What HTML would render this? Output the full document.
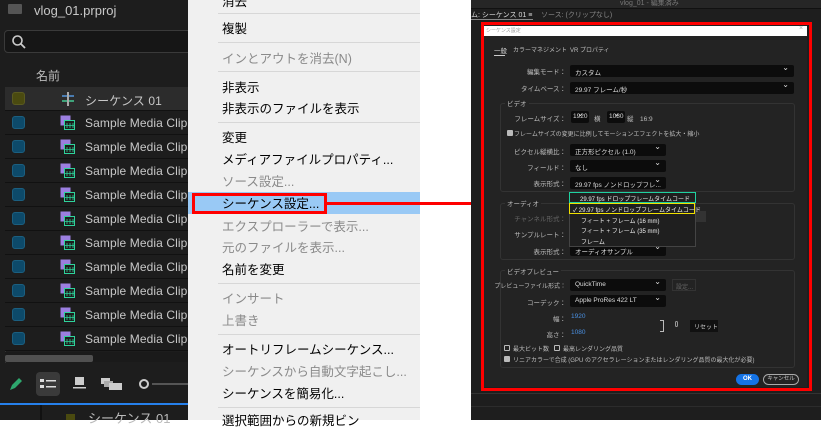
<!DOCTYPE html>
<html><head><meta charset="utf-8"><style>
*{margin:0;padding:0;box-sizing:border-box}
body{width:821px;height:420px;overflow:hidden;background:#fff;position:relative;font-family:"Liberation Sans","Noto Sans CJK JP",sans-serif}
.a{position:absolute;white-space:nowrap}
.lp{left:0;top:0;width:188px;height:420px;background:#1d1d1d}
.row{left:5px;width:183px;height:24px;border-bottom:1px solid #111;background:#1d1d1d}
.sw{left:7px;top:5px;width:13px;height:13px;border-radius:3px;background:#0d4a6a;border:1px solid #1b5f80}
.rt{left:80px;top:5px;color:#c8c8c8;font-size:12px;letter-spacing:0.1px}
.menu{left:188px;top:0;width:232px;height:420px;background:#f0f0f0}
.mi{left:34px;font-size:12.5px;color:#000}
.g{color:#8a8a8a}
.sep{left:30px;width:202px;height:1px;background:#d7d7d7}
.dl{font-size:6.5px;color:#bdbdbd}
.lbl{font-size:6.5px;color:#bdbdbd;text-align:right;width:80px}
.dd{height:12px;background:#0c0c0c;border-radius:2px;font-size:6.5px;color:#ddd;padding:2px 0 0 5px}
.dd:after{content:"⌄";position:absolute;right:5px;top:-2px;font-size:8px;color:#ddd}
.grp{border:1px solid #333;border-radius:3px}
.cb{width:6px;height:6px;border:1px solid #bbb;border-radius:1px}
.li{font-size:6px;color:#eee}
</style></head><body>
<div class="a lp">
 <div class="a" style="left:8px;top:4px;width:14px;height:10px;background:#555;border-radius:1px"></div>
 <div class="a" style="left:34px;top:3px;color:#c8c8c8;font-size:13px">vlog_01.prproj</div>
 <div class="a" style="left:4px;top:30px;width:190px;height:23px;border:1px solid #3a3a3a;border-radius:4px;background:#161616"></div>
 <svg class="a" style="left:11px;top:34px" width="16" height="16"><circle cx="6.5" cy="6.5" r="4.5" stroke="#ccc" stroke-width="1.6" fill="none"/><path d="M10 10l4 4" stroke="#ccc" stroke-width="1.8"/></svg>
 <div class="a" style="left:36px;top:67px;color:#bbb;font-size:12px">名前</div>
 <div class="a" style="left:5px;top:87px;width:1px;height:276px;background:#333"></div>
</div>
<div class="a row" style="top:87px;background:#2c2c2c"><div class="a sw" style="background:#4a4a10;border-color:#5a5a20"></div>
<svg class="a" style="left:55px;top:5px" width="16" height="14"><rect x="2" y="3" width="12" height="2" fill="#4a7bb0"/><rect x="2" y="8" width="12" height="2" fill="#3fa37a"/><rect x="7" y="0" width="2" height="14" fill="#aaa"/></svg>
<div class="a rt">シーケンス 01</div></div>
<div id="rows"></div>
<script>
var h='';for(var i=1;i<11;i++){var t=87+i*24;h+='<div class="a row" style="top:'+t+'px"><div class="a sw"></div><svg class="a" style="left:55px;top:4px" width="16" height="16"><rect x="0.5" y="0.5" width="10" height="10" fill="#9b7fe0"/><rect x="4.5" y="5.5" width="10" height="9" fill="#1d1d1d" stroke="#2ed39b"/><path d="M7 8v5M10 8v5M13 8v5M5 10.5h9" stroke="#2ed39b" stroke-width="0.8"/></svg><div class="a rt">Sample Media Clip</div></div>'}document.getElementById('rows').outerHTML=h;
</script>
<div class="a" style="left:5px;top:352px;width:183px;height:10px;background:#1a1a1a"></div>
<div class="a" style="left:5px;top:355px;width:88px;height:7px;background:#505050;border-radius:2px"></div>
<svg class="a" style="left:8px;top:376px" width="16" height="16"><path d="M2 14l2-5 7-7 3 3-7 7z" fill="#2ea86e"/></svg>
<div class="a" style="left:36px;top:372px;width:24px;height:24px;background:#3a3a3a;border-radius:4px"></div>
<svg class="a" style="left:40px;top:378px" width="16" height="12"><rect x="0" y="1" width="4" height="3" fill="#ddd"/><rect x="0" y="7" width="4" height="3" fill="#ddd"/><rect x="6" y="2" width="10" height="1.5" fill="#ddd"/><rect x="6" y="8" width="10" height="1.5" fill="#ddd"/></svg>
<svg class="a" style="left:73px;top:377px" width="14" height="13"><rect x="2" y="0" width="9" height="8" fill="#ccc"/><rect x="0" y="10" width="13" height="1.5" fill="#ccc"/></svg>
<svg class="a" style="left:101px;top:377px" width="22" height="13"><rect x="0" y="1" width="9" height="6" fill="#ccc"/><rect x="3" y="4" width="9" height="6" fill="#aaa"/><rect x="8" y="6" width="13" height="7" fill="#ccc"/></svg>
<div class="a" style="left:139px;top:379px;width:10px;height:10px;border:2px solid #ccc;border-radius:50%"></div>
<div class="a" style="left:152px;top:383px;width:36px;height:2px;background:#555"></div>
<div class="a" style="left:0;top:403px;width:188px;height:2px;background:#2680eb"></div>
<div class="a" style="left:40px;top:405px;width:2px;height:15px;background:#111"></div>
<div class="a" style="left:66px;top:414px;width:9px;height:6px;background:#4a4a10"></div>
<div class="a" style="left:88px;top:408px;color:#bbb;font-size:13px">シーケンス 01</div>
<div class="a menu">
 <div class="a mi" style="top:-9px">消去</div>
 <div class="a sep" style="top:13px"></div>
 <div class="a mi" style="top:18px">複製</div>
 <div class="a sep" style="top:42px"></div>
 <div class="a mi g" style="top:48px">インとアウトを消去(N)</div>
 <div class="a sep" style="top:71px"></div>
 <div class="a mi" style="top:77px">非表示</div>
 <div class="a mi" style="top:98px">非表示のファイルを表示</div>
 <div class="a sep" style="top:122px"></div>
 <div class="a mi" style="top:127px">変更</div>
 <div class="a mi" style="top:149px">メディアファイルプロパティ...</div>
 <div class="a mi g" style="top:171px">ソース設定...</div>
 <div class="a" style="left:0;top:192px;width:232px;height:22px;background:#99c9f5"></div>
 <div class="a mi" style="top:193px">シーケンス設定...</div>
 <div class="a mi g" style="top:216px">エクスプローラーで表示...</div>
 <div class="a mi g" style="top:237px">元のファイルを表示...</div>
 <div class="a mi" style="top:259px">名前を変更</div>
 <div class="a sep" style="top:283px"></div>
 <div class="a mi g" style="top:288px">インサート</div>
 <div class="a mi g" style="top:310px">上書き</div>
 <div class="a sep" style="top:334px"></div>
 <div class="a mi" style="top:339px">オートリフレームシーケンス...</div>
 <div class="a mi g" style="top:361px">シーケンスから自動文字起こし...</div>
 <div class="a mi" style="top:383px">シーケンスを簡易化...</div>
 <div class="a sep" style="top:407px"></div>
 <div class="a mi" style="top:410px">選択範囲からの新規ビン</div>
</div>
<div class="a" style="left:192px;top:193px;width:135px;height:21px;border:3px solid #f00"></div>
<div class="a" style="left:327px;top:202px;width:156px;height:3px;background:#f00"></div>
<div class="a" style="left:471px;top:0;width:350px;height:420px;background:#1e1e1e"></div>
<div class="a" style="left:471px;top:0;width:350px;height:8px;background:#262626"></div>
<div class="a" style="left:620px;top:-2px;font-size:7px;color:#777">vlog_01 - 編集済み</div>
<div class="a" style="left:471px;top:8px;width:350px;height:1px;background:#111"></div>
<div class="a" style="left:471px;top:10px;font-size:7px;color:#ddd">ム: シーケンス 01 ≡</div>
<div class="a" style="left:541px;top:10px;font-size:7px;color:#888">ソース: (クリップなし)</div>
<div class="a" style="left:471px;top:19px;width:62px;height:1px;background:#888"></div>
<div class="a" style="left:471px;top:393px;width:350px;height:1px;background:#333"></div>
<div class="a" style="left:471px;top:406px;width:350px;height:1px;background:#2c2c2c"></div>
<div class="a" style="left:484px;top:25px;width:323px;height:362px;background:#232323"></div>
<div class="a" style="left:484px;top:26px;width:323px;height:10px;background:#fff"></div>
<div class="a" style="left:486px;top:27px;font-size:5px;color:#999">シーケンス設定</div>
<div class="a" style="left:799px;top:25px;font-size:7px;color:#aaa">×</div>
<div class="a" style="left:481px;top:22px;width:331px;height:369px;border:3px solid #f00"></div>
<div class="a dl" style="left:494px;top:45px;color:#ddd">一般</div>
<div class="a" style="left:494px;top:55px;width:11px;height:1px;background:#ccc"></div>
<div class="a dl" style="left:513px;top:45px;font-size:6px">カラーマネジメント</div>
<div class="a dl" style="left:570px;top:45px;font-size:6px">VR プロパティ</div>
<div class="a lbl" style="left:486px;top:66px">編集モード：</div>
<div class="a dd" style="left:570px;top:65px;width:224px">カスタム</div>
<div class="a lbl" style="left:486px;top:83px">タイムベース：</div>
<div class="a dd" style="left:570px;top:82px;width:224px">29.97 フレーム/秒</div>
<div class="a grp" style="left:500px;top:103px;width:295px;height:89px"></div>
<div class="a dl" style="left:505px;top:98px;background:#232323;padding:0 2px">ビデオ</div>
<div class="a lbl" style="left:486px;top:113px">フレームサイズ：</div>
<div class="a dd" style="left:571px;top:111px;width:18px;padding-left:2px">1920</div>
<div class="a dl" style="left:594px;top:113px">横</div>
<div class="a dd" style="left:607px;top:111px;width:18px;padding-left:2px">1080</div>
<div class="a dl" style="left:627px;top:113px">縦　16:9</div>
<div class="a cb" style="left:507px;top:130px;background:#bbb"></div>
<div class="a dl" style="left:514px;top:129px;font-size:6px">フレームサイズの変更に比例してモーションエフェクトを拡大・縮小</div>
<div class="a lbl" style="left:486px;top:146px">ピクセル縦横比：</div>
<div class="a dd" style="left:570px;top:144px;width:96px">正方形ピクセル (1.0)</div>
<div class="a lbl" style="left:486px;top:162px">フィールド：</div>
<div class="a dd" style="left:570px;top:160px;width:96px">なし</div>
<div class="a lbl" style="left:486px;top:178px">表示形式：</div>
<div class="a dd" style="left:570px;top:177px;width:96px">29.97 fps ノンドロップフレ...</div>
<div class="a grp" style="left:500px;top:203px;width:295px;height:57px"></div>
<div class="a dl" style="left:505px;top:198px;background:#232323;padding:0 2px">オーディオ</div>
<div class="a lbl" style="left:486px;top:213px;color:#666">チャンネル形式：</div>
<div class="a" style="left:696px;top:211px;width:10px;height:11px;background:#333"></div>
<div class="a lbl" style="left:486px;top:229px">サンプルレート：</div>
<div class="a lbl" style="left:486px;top:246px">表示形式：</div>
<div class="a dd" style="left:570px;top:244px;width:96px">オーディオサンプル</div>
<div class="a grp" style="left:500px;top:270px;width:295px;height:98px"></div>
<div class="a dl" style="left:505px;top:266px;background:#232323;padding:0 2px">ビデオプレビュー</div>
<div class="a lbl" style="left:486px;top:281px;font-size:6px">プレビューファイル形式：</div>
<div class="a dd" style="left:570px;top:279px;width:96px">QuickTime</div>
<div class="a" style="left:672px;top:279px;width:24px;height:12px;border:1px solid #333;font-size:6px;color:#666;padding:2px 0 0 3px">設定...</div>
<div class="a lbl" style="left:486px;top:297px">コーデック：</div>
<div class="a dd" style="left:570px;top:295px;width:96px">Apple ProRes 422 LT</div>
<div class="a lbl" style="left:486px;top:313px">幅：</div>
<div class="a dl" style="left:571px;top:313px;color:#4a90e2">1920</div>
<div class="a lbl" style="left:486px;top:329px">高さ：</div>
<div class="a dl" style="left:571px;top:329px;color:#4a90e2">1080</div>
<div class="a" style="left:660px;top:320px;width:4px;height:12px;border:1px solid #bbb;border-left:none"></div>
<div class="a" style="left:675px;top:321px;width:3px;height:6px;border:1px solid #999;border-radius:2px"></div>
<div class="a" style="left:690px;top:320px;width:28px;height:12px;background:#111;font-size:6px;color:#ccc;padding:2px 0 0 4px">リセット</div>
<div class="a cb" style="left:504px;top:345px"></div>
<div class="a dl" style="left:513px;top:344px;font-size:6px">最大ビット数</div>
<div class="a cb" style="left:554px;top:345px"></div>
<div class="a dl" style="left:563px;top:344px;font-size:6px">最高レンダリング品質</div>
<div class="a cb" style="left:504px;top:356px;background:#bbb"></div>
<div class="a dl" style="left:513px;top:355px;font-size:6px">リニアカラーで合成 (GPU のアクセラレーションまたはレンダリング品質の最大化が必要)</div>
<div class="a" style="left:736px;top:374px;width:23px;height:11px;background:#1473e6;border-radius:6px;font-size:6px;color:#fff;font-weight:bold;text-align:center;line-height:11px">OK</div>
<div class="a" style="left:763px;top:374px;width:36px;height:11px;border:1px solid #aaa;border-radius:6px;font-size:5.5px;color:#ccc;text-align:center;line-height:9px">キャンセル</div>
<div class="a" style="left:569px;top:192px;width:127px;height:55px;background:#1f1f1f;border:1px solid #444"></div>
<div class="a" style="left:569px;top:192px;width:127px;height:11px;border:1.5px solid #1fd1a0"></div>
<div class="a li" style="left:580px;top:194px">29.97 fps ドロップフレームタイムコード</div>
<div class="a" style="left:569px;top:203px;width:126px;height:11px;border:1.5px solid #f0e000"></div>
<div class="a li" style="left:573px;top:205px">✓ 29.97 fps ノンドロップフレームタイムコード</div>
<div class="a li" style="left:581px;top:216px">フィート + フレーム (16 mm)</div>
<div class="a li" style="left:581px;top:226px">フィート + フレーム (35 mm)</div>
<div class="a li" style="left:581px;top:237px">フレーム</div>
</body></html>
